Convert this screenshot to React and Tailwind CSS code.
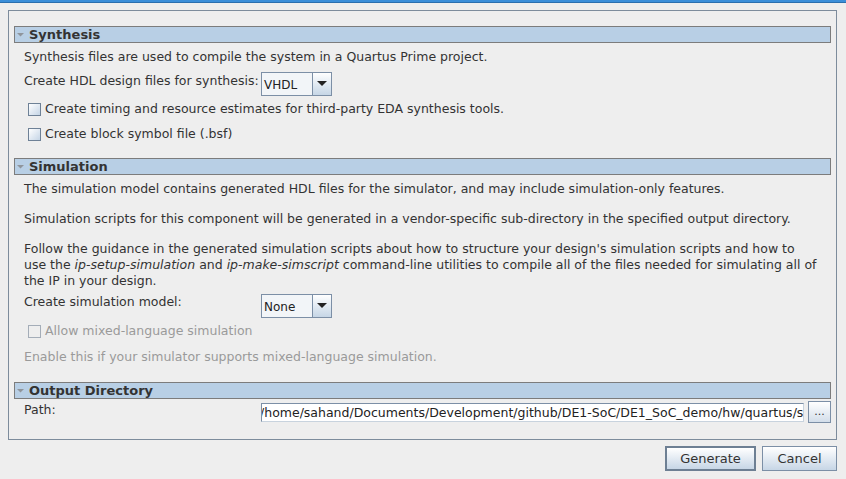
const font = { fontFamily: '"DejaVu Sans", sans-serif' }

function Header({ title }) {
  return (
    <div className="h-[17px] flex items-center border border-[#7c7c7c] bg-[#b8cfe5]">
      <svg width="7" height="4" viewBox="0 0 7 4" className="ml-[2px] mr-[5px]">
        <polygon points="0,0 7,0 3.5,3.5" fill="#8f959c" />
      </svg>
      <span className="text-[13px] font-bold text-[#333333] leading-none">{title}</span>
    </div>
  )
}

function Combo({ value }) {
  return (
    <div className="flex h-[24px] w-[71px] border border-[#7c8fa6]">
      <div className="flex-1 bg-[#f2f5f8] text-[12px] text-[#222] flex items-center pl-[2px] pt-[1px]">{value}</div>
      <div className="w-[19px] border-l border-[#7c8fa6] bg-gradient-to-b from-[#ffffff] to-[#c6d6e6] flex items-center justify-center">
        <svg width="10" height="6" viewBox="0 0 10 6">
          <polygon points="0,0 10,0 5,5" fill="#222" />
        </svg>
      </div>
    </div>
  )
}

function Check({ label, disabled }) {
  return (
    <div className="h-[16px] flex items-center ml-[4px]">
      <div
        className={`w-[13px] h-[13px] border ${
          disabled ? 'border-[#a4adb8] bg-[#eeeeee]' : 'border-[#6e8196] bg-gradient-to-br from-[#ffffff] to-[#c5d5e6]'
        }`}
      />
      <span className={`ml-[4px] ${disabled ? 'text-[#9a9a9a]' : 'text-[#333333]'}`}>{label}</span>
    </div>
  )
}

export default function App() {
  return (
    <div className="w-[846px] h-[479px] bg-[#eeeeee] flex flex-col overflow-hidden" style={font}>
      {/* window title bar edge */}
      <div className="h-[2px] bg-[#3b8fd9]" />
      <div className="h-[1px] bg-[#2a6fae]" />

      {/* main panel */}
      <div className="mt-[7px] ml-[8px] w-[829px] h-[430px] border border-[#7d8c9c] px-[5px] pt-[15px] flex flex-col">
        <Header title="Synthesis" />
        <div className="pl-[10px] text-[12.5px] text-[#333333] flex flex-col leading-[16px]">
          <div className="h-[16px] mt-[6px]">
            Synthesis files are used to compile the system in a Quartus Prime project.
          </div>
          <div className="flex mt-[7px] h-[24px]">
            <div className="w-[237px] pt-[1px]">Create HDL design files for synthesis:</div>
            <Combo value="VHDL" />
          </div>
          <div className="mt-[5px]">
            <Check label="Create timing and resource estimates for third-party EDA synthesis tools." />
          </div>
          <div className="mt-[9px]">
            <Check label="Create block symbol file (.bsf)" />
          </div>
        </div>

        <div className="mt-[16px]">
          <Header title="Simulation" />
        </div>
        <div className="pl-[10px] text-[12.5px] text-[#333333] flex flex-col leading-[16px]">
          <div className="mt-[6px]">
            The simulation model contains generated HDL files for the simulator, and may include simulation-only features.
          </div>
          <div className="mt-[14px]">
            Simulation scripts for this component will be generated in a vendor-specific sub-directory in the specified output directory.
          </div>
          <div className="mt-[14px] whitespace-nowrap">
            Follow the guidance in the generated simulation scripts about how to structure your design's simulation scripts and how to
            <br />
            use the <i>ip-setup-simulation</i> and <i>ip-make-simscript</i> command-line utilities to compile all of the files needed for simulating all of
            <br />
            the IP in your design.
          </div>
          <div className="flex mt-[5px] h-[24px]">
            <div className="w-[237px]">Create simulation model:</div>
            <Combo value="None" />
          </div>
          <div className="mt-[5px]">
            <Check label="Allow mixed-language simulation" disabled />
          </div>
          <div className="mt-[10px] text-[#9a9a9a]">Enable this if your simulator supports mixed-language simulation.</div>
        </div>

        <div className="mt-[17px]">
          <Header title="Output Directory" />
        </div>
        <div className="pl-[10px] text-[12.5px] text-[#333333] flex mt-[2px] h-[23px]">
          <div className="w-[237px] leading-[16px] pt-[1px]">Path:</div>
          <div className="w-[543px] h-[19px] mt-[2px] border border-[#7c8fa6] border-r-[#c8d3de] border-b-[#c8d3de] bg-white overflow-hidden whitespace-nowrap leading-[17px] text-[#222]">
            <span className="-ml-[2px]">/home/sahand/Documents/Development/github/DE1-SoC/DE1_SoC_demo/hw/quartus/soc_system</span>
          </div>
          <div className="ml-[4px] w-[23px] h-[22px] border border-[#7c8fa6] bg-gradient-to-b from-[#ffffff] to-[#d3deea] flex items-center justify-center text-[11px] text-[#333] leading-none pb-[2px]">
            ...
          </div>
        </div>
      </div>

      {/* buttons */}
      <div className="flex justify-end gap-[6px] mt-[6px] pr-[9px]">
        <button className="w-[91px] h-[25px] border-2 border-[#6d7f93] bg-gradient-to-b from-[#ffffff] to-[#c7d6e6] text-[13px] text-[#333]">
          Generate
        </button>
        <button className="w-[75px] h-[25px] border border-[#7c8fa6] bg-gradient-to-b from-[#ffffff] to-[#c7d6e6] text-[13px] text-[#333]">
          Cancel
        </button>
      </div>
    </div>
  )
}
